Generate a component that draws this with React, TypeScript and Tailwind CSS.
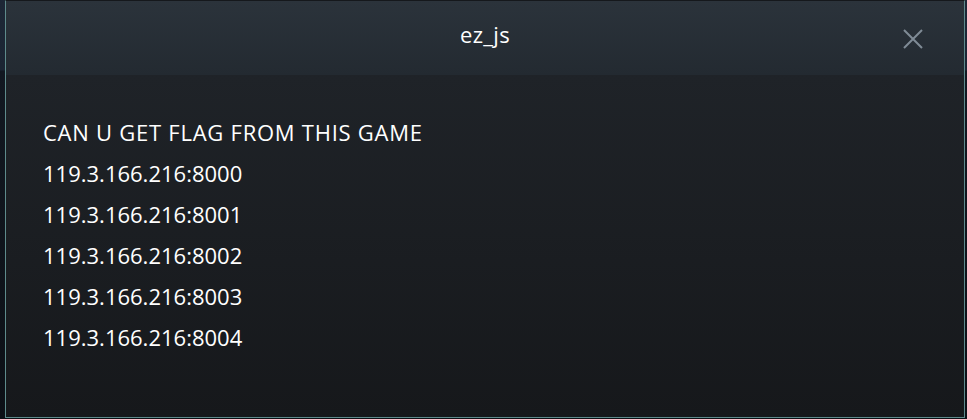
import React from "react";

export default function App() {
  const lines = [
    "119.3.166.216:8000",
    "119.3.166.216:8001",
    "119.3.166.216:8002",
    "119.3.166.216:8003",
    "119.3.166.216:8004",
  ];
  return (
    <div
      className="w-[967px] h-[419px] bg-[linear-gradient(180deg,#1d2736_0px,#1b2533_70px,#121821_71px,#0c1016_419px)] overflow-hidden"
      style={{ fontFamily: '"Open Sans", "Noto Sans", sans-serif' }}
    >
      <div className="ml-[5px] w-[960px] h-[418px] flex flex-col border-x border-b border-[#5e8b8c] border-t border-t-[#15181c]">
        <div className="relative h-[74px] shrink-0 bg-[linear-gradient(180deg,#2b333b,#232a31)] flex items-center justify-center">
          <div className="text-[22px] text-white leading-none -mt-[8px] tracking-[0.3px]">ez_js</div>
          <button className="absolute left-[896px] top-[27px] w-[22px] h-[22px] flex items-center justify-center">
            <svg width="20" height="20" viewBox="0 0 20 20" fill="none">
              <path d="M1 1 L19 19 M19 1 L1 19" stroke="#7f8b96" strokeWidth="2" />
            </svg>
          </button>
        </div>
        <div className="flex-1 bg-[linear-gradient(180deg,#1f2328,#16181b)] pl-[37px] pt-[37px] flex flex-col">
          <div className="text-[22px] leading-[41px] text-white tracking-[0.75px]">
            CAN U GET FLAG FROM THIS GAME
          </div>
          {lines.map((l) => (
            <div key={l} className="text-[22px] leading-[41px] text-white">
              {l}
            </div>
          ))}
        </div>
      </div>
    </div>
  );
}
